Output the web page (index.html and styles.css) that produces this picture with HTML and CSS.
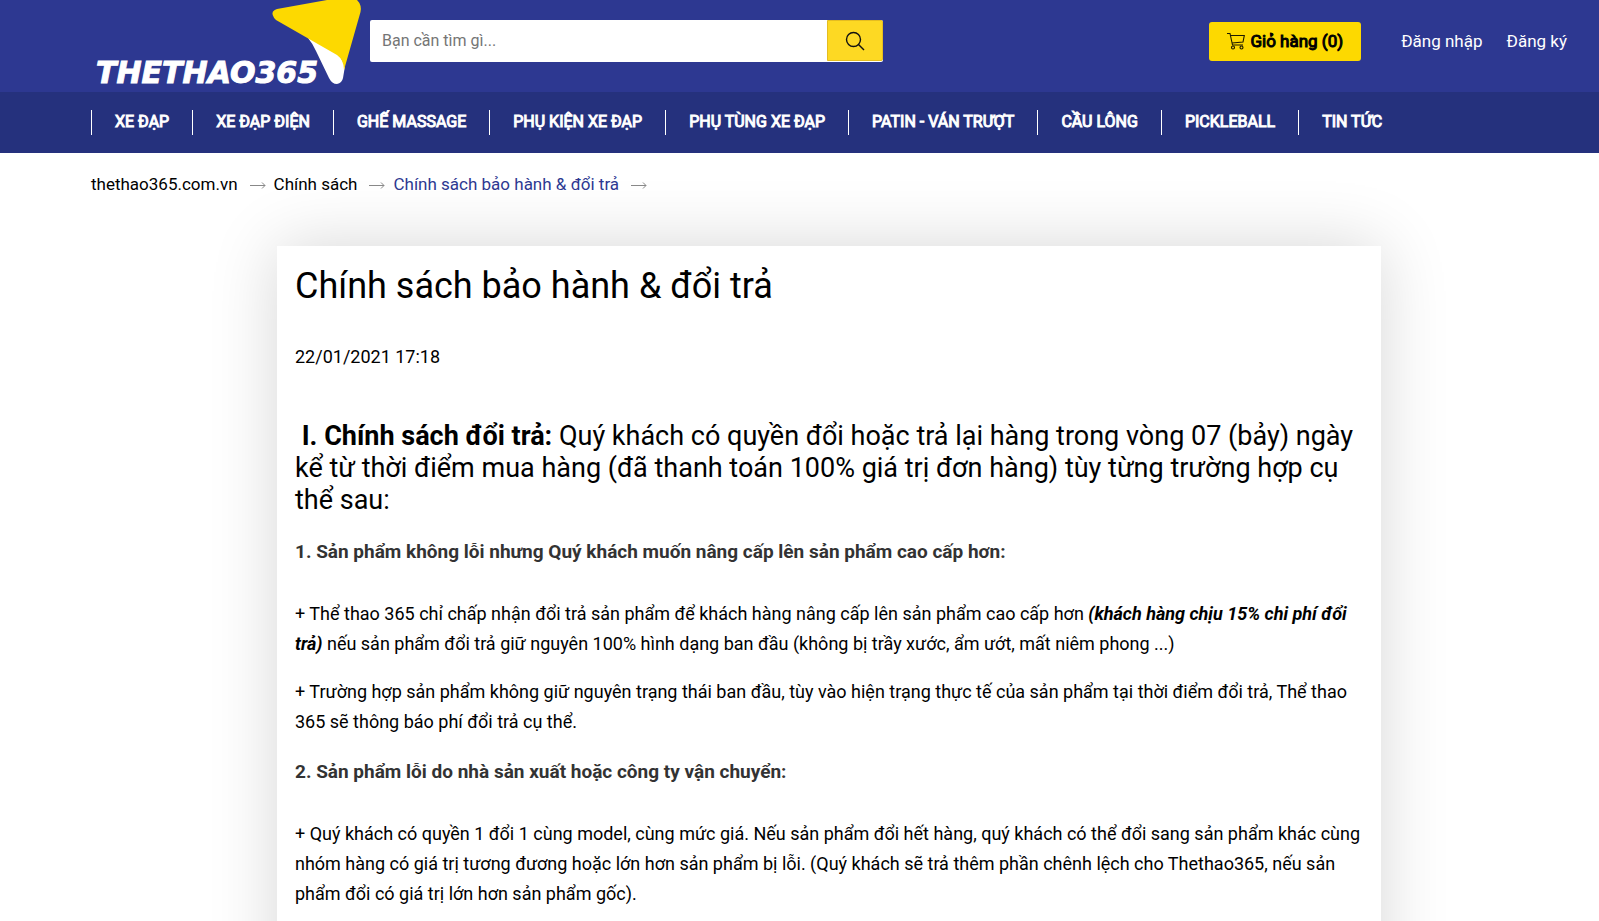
FILE: index.html
```html
<!DOCTYPE html>
<html lang="vi">
<head>
<meta charset="utf-8">
<meta name="viewport" content="width=device-width, initial-scale=1">
<title>Chính sách bảo hành &amp; đổi trả</title>
<link rel="stylesheet" href="styles.css">
</head>
<body>
<header class="header">
  <div class="topbar">
    <a class="logo" href="#" aria-label="Thethao365">
      <svg class="logo-art" viewBox="0 0 272 92" aria-hidden="true">
        <path fill="#fff" d="M217 38 Q222 44 225 51 L238 78 Q241 84 246 84 Q251 83 252 78 L254 66 L244 46Z"/>
        <path fill="#fdd900" d="M186 9 L236 0 H266 Q271 5 269.500 12 L253 70 Q253 60 246 55 L185 20 Q180 15 182 11.500 Q183.500 9.500 186 9Z"/>
        <text class="logo-text" x="5" y="83">THETHAO365</text>
      </svg>
    </a>
    <form class="search">
      <input class="search-input" type="text" placeholder="Bạn cần tìm gì..." aria-label="Tìm kiếm">
      <button class="search-button" type="button" aria-label="Tìm">
        <svg width="20" height="20" viewBox="0 0 20 20" fill="none" stroke="#111" stroke-width="1.400"><circle cx="8.500" cy="8.500" r="7"/><path d="M13.500 13.500 L19 19"/></svg>
      </button>
    </form>
    <div class="account">
      <a class="cart" href="#">
        <svg width="18" height="18" viewBox="0 0 18 18" fill="none" stroke="#1c1a00" stroke-width="1.100"><path d="M0 1.500 H3 L5.500 13 H16 M3.700 3.500 H17.300 L16 10 L5 11"/><circle cx="6" cy="15.500" r="1.500"/><circle cx="14.500" cy="15.500" r="1.500"/></svg>
        <span>Giỏ hàng (0)</span>
      </a>
      <a class="account-link" href="#">Đăng nhập</a>
      <a class="account-link" href="#">Đăng ký</a>
    </div>
  </div>
  <nav class="nav">
    <a class="nav-item" href="#">XE ĐẠP</a>
    <a class="nav-item" href="#">XE ĐẠP ĐIỆN</a>
    <a class="nav-item" href="#">GHẾ MASSAGE</a>
    <a class="nav-item" href="#">PHỤ KIỆN XE ĐẠP</a>
    <a class="nav-item" href="#">PHỤ TÙNG XE ĐẠP</a>
    <a class="nav-item" href="#">PATIN - VÁN TRƯỢT</a>
    <a class="nav-item" href="#">CẦU LÔNG</a>
    <a class="nav-item" href="#">PICKLEBALL</a>
    <a class="nav-item" href="#">TIN TỨC</a>
  </nav>
</header>
<main class="content">
  <div class="breadcrumb">
    <a class="crumb" href="#">thethao365.com.vn</a>
    <svg class="arrow" width="16" height="8" viewBox="0 0 16 8"><path d="M0 4.500 H15 M12 1.500 L15 4.500 L12 7.500"/></svg>
    <a class="crumb" href="#">Chính sách</a>
    <svg class="arrow" width="16" height="8" viewBox="0 0 16 8"><path d="M0 4.500 H15 M12 1.500 L15 4.500 L12 7.500"/></svg>
    <a class="crumb current" href="#">Chính sách bảo hành &amp; đổi trả</a>
    <svg class="arrow" width="16" height="8" viewBox="0 0 16 8"><path d="M0 4.500 H15 M12 1.500 L15 4.500 L12 7.500"/></svg>
  </div>
  <article class="article">
    <h1 class="title">Chính sách bảo hành &amp; đổi trả</h1>
    <time class="date">22/01/2021 17:18</time>
    <h2 class="lead">&nbsp;<strong class="strong">I. Chính sách đổi trả:</strong> Quý khách có quyền đổi hoặc trả lại hàng trong vòng 07 (bảy) ngày kể từ thời điểm mua hàng (đã thanh toán 100% giá trị đơn hàng) tùy từng trường hợp cụ thể sau:</h2>
    <h3 class="subhead">1. Sản phẩm không lỗi nhưng Quý khách muốn nâng cấp lên sản phẩm cao cấp hơn:</h3>
    <p class="text">+ Thể thao 365 chỉ chấp nhận đổi trả sản phẩm để khách hàng nâng cấp lên sản phẩm cao cấp hơn <em class="strong">(khách hàng chịu 15% chi phí đổi trả)</em> nếu sản phẩm đổi trả giữ nguyên 100% hình dạng ban đầu (không bị trầy xước, ẩm ướt, mất niêm phong ...)</p>
    <p class="text">+ Trường hợp sản phẩm không giữ nguyên trạng thái ban đầu, tùy vào hiện trạng thực tế của sản phẩm tại thời điểm đổi trả, Thể thao 365 sẽ thông báo phí đổi trả cụ thể.</p>
    <h3 class="subhead">2. Sản phẩm lỗi do nhà sản xuất hoặc công ty vận chuyển:</h3>
    <p class="text">+ Quý khách có quyền 1 đổi 1 cùng model, cùng mức giá. Nếu sản phẩm đổi hết hàng, quý khách có thể đổi sang sản phẩm khác cùng nhóm hàng có giá trị tương đương hoặc lớn hơn sản phẩm bị lỗi. (Quý khách sẽ trả thêm phần chênh lệch cho Thethao365, nếu sản phẩm đổi có giá trị lớn hơn sản phẩm gốc).</p>
  </article>
</main>
</body>
</html>
```
FILE: styles.css
```css
* { box-sizing: border-box; }
html { height: 100%; overflow: hidden; }
body {
  margin: 0;
  height: 100%;
  overflow: hidden;
  background: #fff;
  color: #000;
  font-family: Roboto, "Liberation Sans", sans-serif;
  font-size: 18px;
  line-height: 30px;
}
a { color: inherit; text-decoration: none; }
.topbar {
  display: flex;
  height: 92px;
  padding: 0 32px 0 91px;
  background: #2d3891;
}
.logo { flex: none; width: 272px; }
.logo-art { display: block; width: 100%; }
.logo-text {
  fill: #fff;
  stroke: #fff;
  stroke-width: 1px;
  font-family: "DejaVu Sans", sans-serif;
  font-size: 30px;
  font-style: italic;
  font-weight: 700;
}
.search {
  display: flex;
  flex: 0 1 513px;
  height: 42px;
  margin: 20px 0 0 7px;
  background: #fff;
  border-radius: 2px;
}
.search-input {
  flex: 1;
  min-width: 0;
  padding: 0 12px 2px;
  border: 0;
  background: transparent;
  font: 16px Roboto, sans-serif;
}
.search-input::placeholder { color: #757575; }
.search-button {
  display: flex;
  align-items: center;
  justify-content: center;
  width: 56px;
  height: 41px;
  padding: 0;
  border: 1px solid #e5bd20;
  border-radius: 0 2px 2px 0;
  background: #fdd923;
}
.account {
  display: flex;
  align-items: center;
  gap: 24px;
  height: 39px;
  margin: 22px 0 0 auto;
  color: #fff;
  font-size: 17px;
  line-height: 28px;
  white-space: nowrap;
}
.account-link { padding-bottom: 2px; }
.cart {
  display: flex;
  align-items: center;
  gap: 5px;
  height: 39px;
  margin-right: 16px;
  padding: 0 18px 2px;
  border-radius: 3px;
  background: #fdd900;
  color: #000;
  -webkit-text-stroke: 1px currentColor;
}
.nav {
  display: flex;
  align-items: center;
  height: 61px;
  padding: 0 32px 0 91px;
  background: #25317d;
  color: #fff;
  font-size: 16px;
  line-height: 23px;
  white-space: nowrap;
  -webkit-text-stroke: 1px currentColor;
}
.nav-item { padding: 0 23px 2px; border-left: 1px solid #fff; }
.content { padding: 16px 32px 0 91px; }
.breadcrumb {
  display: flex;
  align-items: center;
  gap: 8px;
  font-size: 17px;
}
.arrow { margin: 2px 0 0 4px; fill: none; stroke: #888; }
.current { color: #2d3891; }
.article {
  width: 100%;
  max-width: 1104px;
  min-height: 900px;
  margin: 47px auto 0;
  padding: 18px;
  background: #fff;
  box-shadow: 0 0 64px rgba(0, 0, 0, 0.16);
}
.title { margin: 0; font-size: 36px; line-height: 44px; font-weight: 400; }
.date { display: block; margin-top: 34px; }
.lead { margin: 48px 0 24px; font-size: 27px; line-height: 32px; font-weight: 400; }
.strong { font-weight: 700; }
.subhead {
  margin: 23px 0 35px;
  color: #333;
  font-size: 19px;
  line-height: 24px;
  font-weight: 700;
}
.text { margin: 0 0 18px; }
```
